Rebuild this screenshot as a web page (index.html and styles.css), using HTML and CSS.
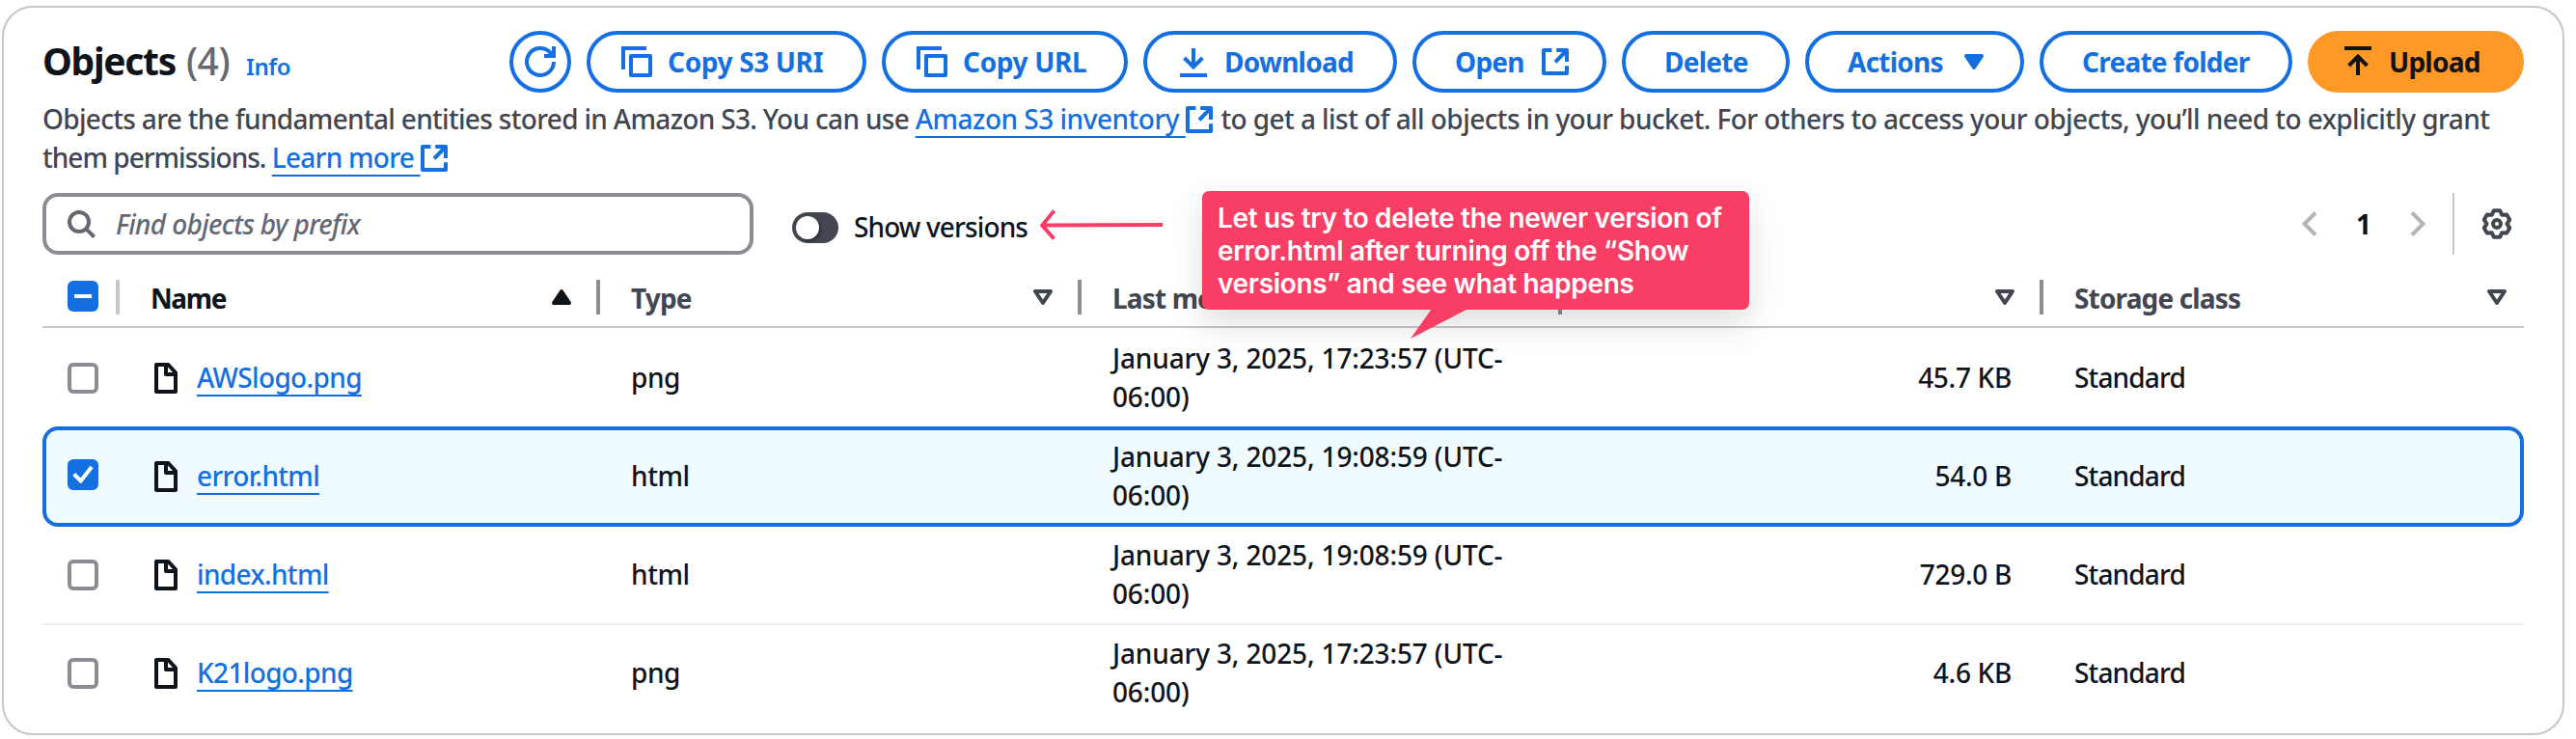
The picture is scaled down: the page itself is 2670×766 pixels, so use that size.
FILE: index.html
```
<!DOCTYPE html>
<html lang="en">
<head>
<meta charset="utf-8">
<title>Objects</title>
<link rel="stylesheet" href="styles.css">
</head>
<body>
<svg class="defs" width="0" height="0">
  <symbol id="i-refresh" viewBox="0 0 16 16"><path d="M15 8a7 7 0 1 1-1.1-3.8"/><path d="M15 0v5h-5"/></symbol>
  <symbol id="i-copy" viewBox="0 0 16 16"><path d="M13 1H1v11"/><path stroke-linejoin="round" d="M5 5h10v10H5z"/></symbol>
  <symbol id="i-download" viewBox="0 0 16 16"><path d="M1 15h14M8 1v10M3.3 6 8 10.7 12.7 6"/></symbol>
  <symbol id="i-upload" viewBox="0 0 16 16"><path d="M1 1h14M8 15V5M3.3 10 8 5.3l4.7 4.7"/></symbol>
  <symbol id="i-external" viewBox="0 0 16 16"><path stroke-linejoin="round" d="M6.2 2H2v12h12v-3.9M8.6 2H14v6M14 2 8 8.2"/></symbol>
  <symbol id="i-file" viewBox="0 0 16 16"><path stroke-linejoin="round" d="M3 1h6.2L13 5.2V15H3zM8 1v5h5"/></symbol>
  <symbol id="i-caret" viewBox="0 0 16 16"><path stroke-linejoin="round" d="M4 5h8l-4 6z"/></symbol>
  <symbol id="i-search" viewBox="0 0 16 16"><circle cx="7" cy="7" r="5"/><path d="m10.6 10.6 4.2 4.2"/></symbol>
  <symbol id="i-left" viewBox="0 0 32 32"><path stroke-width="4" d="M22 4.5 10.5 16 22 27.5"/></symbol>
  <symbol id="i-right" viewBox="0 0 32 32"><path stroke-width="4" d="M10 4.5 21.500 16 10 27.500"/></symbol>
  <symbol id="i-gear" viewBox="-16 -16 32 32"><g stroke-width="4" stroke-linejoin="round"><path d="M-3.100-13.800H3.100L5.300-9.200 10.200-9.600 13.200-4.200 10.400 0 13.200 4.200 10.200 9.600 5.300 9.200 3.100 13.800H-3.100L-5.300 9.200-10.200 9.600-13.200 4.200-10.400 0-13.200-4.200-10.200-9.600-5.300-9.200z"/><circle r="4"/></g></symbol>
</svg>

<main class="card">
  <header class="head">
    <div class="titles">
      <h2 class="title">Objects</h2><span class="count">(4)</span><a class="info">Info</a>
    </div>
    <div class="actions">
      <button class="btn round"><svg class="icon"><use href="#i-refresh"/></svg></button>
      <button class="btn lead w-uri"><svg class="icon"><use href="#i-copy"/></svg><span class="t-uri">Copy S3 URI</span></button>
      <button class="btn lead w-url"><svg class="icon"><use href="#i-copy"/></svg><span class="t-uri">Copy URL</span></button>
      <button class="btn lead w-down"><svg class="icon"><use href="#i-download"/></svg><span>Download</span></button>
      <button class="btn w-open"><span>Open</span><svg class="icon"><use href="#i-external"/></svg></button>
      <button class="btn w-del"><span>Delete</span></button>
      <button class="btn w-act"><span>Actions</span><svg class="icon filled"><use href="#i-caret"/></svg></button>
      <button class="btn w-create"><span>Create folder</span></button>
      <button class="btn lead primary w-up"><svg class="icon"><use href="#i-upload"/></svg><span>Upload</span></button>
    </div>
  </header>

  <p class="desc">Objects are the fundamental entities stored in Amazon S3. You can use <a class="link ext">Amazon S3 inventory&nbsp;</a><svg class="icon inline"><use href="#i-external"/></svg> <span class="tail">to get a list of all objects in your bucket. For others to access your objects, you’ll need to explicitly grant</span><br><span class="second">them permissions. <a class="link more">Learn more&nbsp;</a></span><svg class="icon inline"><use href="#i-external"/></svg></p>

  <div class="toolbar">
    <div class="search"><svg class="icon"><use href="#i-search"/></svg><span>Find objects by prefix</span></div>
    <div class="toggle"><span class="knob"></span></div>
    <span class="toggle-label">Show versions</span>
    <nav class="pager">
      <svg class="icon muted"><use href="#i-left"/></svg>
      <b class="page">1</b>
      <svg class="icon muted"><use href="#i-right"/></svg>
      <span class="rule"></span>
      <svg class="icon gear"><use href="#i-gear"/></svg>
    </nav>
  </div>

  <section class="table">
    <div class="row thead">
      <div class="th check"><span class="box on"><svg viewBox="0 0 32 32"><path d="M7 16h18"/></svg></span></div>
      <div class="th sorted"><span>Name</span><svg class="icon filled up"><use href="#i-caret"/></svg></div>
      <div class="th"><span>Type</span><svg class="icon"><use href="#i-caret"/></svg></div>
      <div class="th"><span>Last modified</span><svg class="icon"><use href="#i-caret"/></svg></div>
      <div class="th"><span></span><svg class="icon"><use href="#i-caret"/></svg></div>
      <div class="th last"><span>Storage class</span><svg class="icon"><use href="#i-caret"/></svg></div>
    </div>
    <div class="row">
      <div class="check"><span class="box"></span></div>
      <div class="td name"><svg class="icon"><use href="#i-file"/></svg><a class="link">AWSlogo.png</a></div>
      <div class="td">png</div>
      <div class="td date">January 3, 2025, 17:23:57 (UTC-<br>06:00)</div>
      <div class="td num">45.7 KB</div>
      <div class="td std">Standard</div>
    </div>
    <div class="row selected">
      <div class="check"><span class="box on"><svg viewBox="0 0 32 32"><path d="m6.700 15.500 7 7L25 8"/></svg></span></div>
      <div class="td name"><svg class="icon"><use href="#i-file"/></svg><a class="link">error.html</a></div>
      <div class="td">html</div>
      <div class="td date">January 3, 2025, 19:08:59 (UTC-<br>06:00)</div>
      <div class="td num">54.0 B</div>
      <div class="td std">Standard</div>
    </div>
    <div class="row lined">
      <div class="check"><span class="box"></span></div>
      <div class="td name"><svg class="icon"><use href="#i-file"/></svg><a class="link">index.html</a></div>
      <div class="td">html</div>
      <div class="td date">January 3, 2025, 19:08:59 (UTC-<br>06:00)</div>
      <div class="td num">729.0 B</div>
      <div class="td std">Standard</div>
    </div>
    <div class="row lower">
      <div class="check"><span class="box"></span></div>
      <div class="td name"><svg class="icon"><use href="#i-file"/></svg><a class="link">K21logo.png</a></div>
      <div class="td">png</div>
      <div class="td date">January 3, 2025, 17:23:57 (UTC-<br>06:00)</div>
      <div class="td num">4.6 KB</div>
      <div class="td std">Standard</div>
    </div>
  </section>
</main>

<svg class="arrow" viewBox="0 0 130 36"><path d="M5 18.600 129 17.900M16.500 3.500 4.200 18.600 16.500 32.500"/></svg>
<div class="bubble">Let us try to delete the newer version of<br>error.html after turning off the “Show<br>versions” and see what happens
  <svg class="pointer" viewBox="0 0 58 32"><path d="M22 0h36v1L0 31z"/></svg>
</div>
</body>
</html>
```
FILE: styles.css
```
* { box-sizing: border-box; }

body {
  margin: 0;
  padding: 6px 0 0 2px;
  background: #fff;
  color: #0f141a;
  font: 500 28px/40px "Noto Sans", "Open Sans", sans-serif;
}

.defs { position: absolute; }

.card {
  width: 2656px;
  height: 756px;
  padding: 24px 40px 0;
  border: 2px solid #c6c6cd;
  border-radius: 32px;
}

.icon {
  flex: none;
  display: block;
  width: 32px;
  height: 32px;
  fill: none;
  stroke: currentColor;
  stroke-width: 2;
}
.icon.filled { fill: currentColor; }
.icon.up { transform: scaleY(-1); }
.icon.inline {
  display: inline-block;
  vertical-align: -6px;
  margin-left: -2px;
  color: #146fe1;
}

/* header */
.head { display: flex; justify-content: space-between; height: 64px; }
.titles { display: flex; align-items: baseline; padding-top: 4px; height: 58px; }
.title { margin: 0; font: 700 39px/54px "Noto Sans", sans-serif; letter-spacing: -1.3px; }
.count { margin-left: 11px; font-size: 39px; font-weight: 500; line-height: 54px; letter-spacing: -.5px; color: #656871; }
.info { margin-left: 17px; font-size: 24px; font-weight: 600; letter-spacing: -.5px; color: #146fe1; }

.actions { display: flex; gap: 16px; }
.btn {
  display: flex;
  align-items: center;
  gap: 16px;
  height: 64px;
  padding: 0 0 0 40px;
  border: 4px solid #146fe1;
  border-radius: 40px;
  background: #fff;
  color: #146fe1;
  font: 700 28px/40px "Noto Sans", sans-serif;
  letter-spacing: -.75px;
  white-space: nowrap;
}
.btn span { margin-top: -1px; }
.btn.lead { padding-left: 32px; }
.btn.round { width: 64px; padding: 0; justify-content: center; }
.btn.primary { border-color: #fe9928; background: #fe9928; color: #0f141a; }
.btn .t-uri { letter-spacing: -.35px; }
.w-uri { width: 290px; }
.w-url { width: 255px; }
.w-down { width: 263px; }
.w-open { width: 201px; }
.w-del { width: 174px; }
.w-act { width: 227px; }
.w-create { width: 262px; }
.w-up { width: 224px; }

/* description */
.desc { margin: 7px 0 17px; color: #424650; letter-spacing: -.68px; white-space: nowrap; }
.desc .tail { letter-spacing: -.57px; }
.desc .second { letter-spacing: -.98px; }
.link {
  color: #146fe1;
  text-decoration: underline;
  text-decoration-thickness: 2px;
  text-underline-offset: 7px;
  text-decoration-skip-ink: none;
  letter-spacing: -.5px;
}
.link.more { letter-spacing: -.75px; }

/* toolbar */
.toolbar { display: flex; align-items: center; height: 64px; }
.search {
  display: flex;
  align-items: center;
  gap: 20px;
  width: 737px;
  height: 64px;
  padding-left: 20px;
  border: 4px solid #8c8c94;
  border-radius: 16px;
  color: #656871;
  font-style: italic;
  letter-spacing: -.65px;
}
.toggle {
  width: 48px;
  height: 32px;
  margin: 8px 16px 0 40px;
  padding: 4px;
  border-radius: 16px;
  background: #424650;
}
.knob {
  display: block;
  width: 24px;
  height: 24px;
  border-radius: 50%;
  background: #fff;
  box-shadow: 2px 2px 2px rgba(0, 7, 22, .35);
}
.toggle-label { margin-top: 6px; letter-spacing: -.88px; }
.pager { display: flex; align-items: center; margin-left: auto; padding-right: 12px; }
.muted { color: #b4b4bb; }
.page { width: 80px; text-align: center; margin-top: -1px; }
.rule { width: 2px; height: 64px; margin: 0 28px 0 20px; background: #c6c6cd; }
.gear { color: #424650; }

/* table */
.row {
  display: grid;
  grid-template-columns: 80px 498px 499px 498px 499px 498px;
  align-items: center;
  height: 102px;
  padding-bottom: 11px;
  padding-top: 11px;
}
.thead { height: 76px; padding: 16px 0 0; border-bottom: 2px solid #c6c6cd; }
.th {
  display: flex;
  align-items: center;
  justify-content: space-between;
  height: 36px;
  margin-top: -2px;
  padding: 0 20px 0 32px;
  border-right: 4px solid #8c8c94;
  color: #424650;
  font-weight: 700;
  letter-spacing: -.85px;
  white-space: nowrap;
}
.th > span:not(.box) { margin-top: 2px; }
.th.sorted { color: #0f141a; letter-spacing: -1.4px; }
.th.check { border-color: #c6c6cd; }
.th.last { border: 0; padding-right: 12px; }
.check, .th.check { padding-left: 26px; }
.box {
  display: block;
  flex: none;
  width: 32px;
  height: 32px;
  margin-top: 2px;
  border: 4px solid #8c8c94;
  border-radius: 6px;
  background: #fff;
}
.box.on { margin-top: -2px; border: 0; background: #146fe1; }
.box svg { display: block; fill: none; stroke: #fff; stroke-width: 4; }
.th .box.on { margin-top: -2px; }

.td { padding: 0 32px; letter-spacing: -.4px; }
.name { display: flex; align-items: center; gap: 16px; }
.name .icon { margin-top: 2px; }
.name .link { letter-spacing: -.65px; }
.date { letter-spacing: -.15px; white-space: nowrap; }
.num { padding-right: 33px; text-align: right; letter-spacing: -.3px; }
.std { letter-spacing: -.85px; }

.row.selected {
  position: relative;
  height: 104px;
  padding-bottom: 13px;
}
.row.selected::before {
  content: "";
  position: absolute;
  inset: 0;
  z-index: -1;
  border: 4px solid #146fe1;
  border-radius: 16px;
  background: #f0fbff;
}
.row.lined { padding-top: 9px; border-bottom: 2px solid #ebebf0; }
.row.lower { padding-top: 9px; padding-bottom: 13px; }

/* annotations laid over the page */
.arrow {
  position: absolute;
  left: 1076px;
  top: 215px;
  width: 130px;
  height: 36px;
  fill: none;
  stroke: #f93e65;
  stroke-width: 4;
}
.bubble {
  position: absolute;
  left: 1246px;
  top: 198px;
  width: 567px;
  height: 123px;
  padding: 11px 0 0 16px;
  border-radius: 7px;
  background: #f93e65;
  box-shadow: 0 16px 36px rgba(0, 0, 0, .13);
  color: #fff;
  font: 600 28px/34px Inter, "Liberation Sans", sans-serif;
  letter-spacing: -.32px;
  white-space: nowrap;
}
.pointer { position: absolute; left: 216px; top: 122px; width: 58px; height: 32px; fill: #f93e65; }
```
